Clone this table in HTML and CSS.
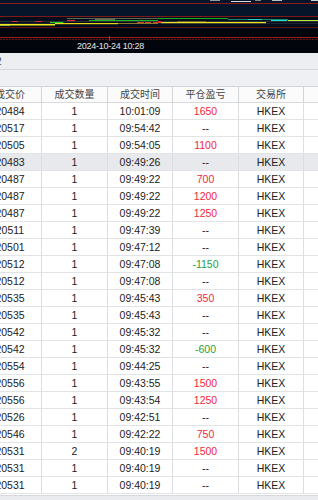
FILE: index.html
```html
<!DOCTYPE html>
<html lang="zh">
<head>
<meta charset="utf-8">
<link rel="stylesheet" href="styles.css">
</head>
<body>
<div class="page">
  <div class="chart">
    <svg class="chart-svg" width="318" height="42" viewBox="0 0 318 42">
      <rect x="0" y="0" width="318" height="16" fill="#07152a"/>
      <rect x="0" y="16" width="318" height="13" fill="#040d1b"/>
      <rect x="0" y="29" width="318" height="13" fill="#02060c"/>
      <!-- top fragments -->
      <rect x="210" y="0" width="10" height="1" fill="#9a9a9a"/>
      <rect x="231" y="1" width="20" height="1" fill="#d8d8d8"/>
      <rect x="255" y="0" width="6" height="1" fill="#8a8a8a"/>
      <rect x="272" y="0" width="10" height="1" fill="#bdbdbd"/>
      <rect x="311" y="0" width="7" height="1" fill="#d0d0d0"/>
      <rect x="0" y="3" width="318" height="1" fill="#8e1c1c"/>
      <rect x="0" y="16" width="318" height="1" fill="#7c1919"/>
      <!-- series -->
      <rect x="0" y="21" width="318" height="1" fill="#2a2f38"/>
      <rect x="0" y="23" width="318" height="1" fill="#1f2530"/>
      <rect x="67" y="18" width="91" height="1" fill="#5a6a50"/>
      <rect x="158" y="18" width="70" height="1" fill="#16b21e"/>
      <rect x="228" y="19" width="60" height="1" fill="#138a6e"/>
      <rect x="248" y="19" width="14" height="1" fill="#1fd0c8"/>
      <rect x="271" y="20" width="16" height="1" fill="#22d8d8"/>
      <rect x="288" y="20" width="30" height="1" fill="#b8e83a"/>
      <rect x="12" y="21" width="6" height="1" fill="#d22a2a"/>
      <rect x="35" y="21" width="7" height="1" fill="#d22a2a"/>
      <rect x="67" y="20" width="8" height="1" fill="#e03030"/>
      <rect x="137" y="22" width="7" height="1" fill="#d84020"/>
      <rect x="145" y="22" width="6" height="1" fill="#d84020"/>
      <rect x="153" y="22" width="8" height="1" fill="#d84020"/>
      <rect x="50" y="22" width="13" height="1" fill="#22d81e"/>
      <rect x="89" y="20" width="69" height="1" fill="#1fb81e"/>
      <rect x="95" y="19" width="20" height="1" fill="#6a6a50"/>
      <rect x="0" y="24" width="55" height="1.5" fill="#f0e81a"/>
      <rect x="55" y="23" width="63" height="1.2" fill="#e8d81a"/>
      <rect x="118" y="23" width="40" height="1" fill="#8a7a2a"/>
      <rect x="161" y="22" width="105" height="1.2" fill="#f0e01a"/>
      <rect x="177" y="21" width="29" height="1" fill="#6a6028"/>
      <rect x="158" y="21" width="3" height="2" fill="#e02a2a"/>
      <rect x="0" y="25" width="10" height="1" fill="#a8b83a"/>
      <rect x="0" y="27" width="318" height="1" fill="#5a1010"/>
      <!-- axis -->
      <rect x="0" y="37" width="318" height="1" fill="#9a1c1c"/>
      <line x1="0" y1="39.5" x2="318" y2="39.5" stroke="#6a1414" stroke-width="1" stroke-dasharray="2 1"/>
      <rect x="109" y="36" width="1" height="5" fill="#d02020"/>
    </svg>
    <div class="chart-label">2024-10-24 10:28</div>
  </div>
  <div class="toolbar"><span class="tb-num">2</span></div>
  <div class="subbar"></div>
  <div class="table">
    <div class="row head">
      <div class="cell">成交价</div><div class="cell">成交数量</div><div class="cell">成交时间</div><div class="cell">平仓盈亏</div><div class="cell">交易所</div><div class="cell blank"></div>
    </div>
    <div class="row"><div class="cell">20484</div><div class="cell">1</div><div class="cell">10:01:09</div><div class="cell up">1650</div><div class="cell">HKEX</div><div class="cell blank"></div></div>
    <div class="row"><div class="cell">20517</div><div class="cell">1</div><div class="cell">09:54:42</div><div class="cell">--</div><div class="cell">HKEX</div><div class="cell blank"></div></div>
    <div class="row"><div class="cell">20505</div><div class="cell">1</div><div class="cell">09:54:05</div><div class="cell up">1100</div><div class="cell">HKEX</div><div class="cell blank"></div></div>
    <div class="row sel"><div class="cell">20483</div><div class="cell">1</div><div class="cell">09:49:26</div><div class="cell">--</div><div class="cell">HKEX</div><div class="cell blank"></div></div>
    <div class="row"><div class="cell">20487</div><div class="cell">1</div><div class="cell">09:49:22</div><div class="cell up">700</div><div class="cell">HKEX</div><div class="cell blank"></div></div>
    <div class="row"><div class="cell">20487</div><div class="cell">1</div><div class="cell">09:49:22</div><div class="cell up">1200</div><div class="cell">HKEX</div><div class="cell blank"></div></div>
    <div class="row"><div class="cell">20487</div><div class="cell">1</div><div class="cell">09:49:22</div><div class="cell up">1250</div><div class="cell">HKEX</div><div class="cell blank"></div></div>
    <div class="row"><div class="cell">20511</div><div class="cell">1</div><div class="cell">09:47:39</div><div class="cell">--</div><div class="cell">HKEX</div><div class="cell blank"></div></div>
    <div class="row"><div class="cell">20501</div><div class="cell">1</div><div class="cell">09:47:12</div><div class="cell">--</div><div class="cell">HKEX</div><div class="cell blank"></div></div>
    <div class="row"><div class="cell">20512</div><div class="cell">1</div><div class="cell">09:47:08</div><div class="cell down">-1150</div><div class="cell">HKEX</div><div class="cell blank"></div></div>
    <div class="row"><div class="cell">20512</div><div class="cell">1</div><div class="cell">09:47:08</div><div class="cell">--</div><div class="cell">HKEX</div><div class="cell blank"></div></div>
    <div class="row"><div class="cell">20535</div><div class="cell">1</div><div class="cell">09:45:43</div><div class="cell up">350</div><div class="cell">HKEX</div><div class="cell blank"></div></div>
    <div class="row"><div class="cell">20535</div><div class="cell">1</div><div class="cell">09:45:43</div><div class="cell">--</div><div class="cell">HKEX</div><div class="cell blank"></div></div>
    <div class="row"><div class="cell">20542</div><div class="cell">1</div><div class="cell">09:45:32</div><div class="cell">--</div><div class="cell">HKEX</div><div class="cell blank"></div></div>
    <div class="row"><div class="cell">20542</div><div class="cell">1</div><div class="cell">09:45:32</div><div class="cell down">-600</div><div class="cell">HKEX</div><div class="cell blank"></div></div>
    <div class="row"><div class="cell">20554</div><div class="cell">1</div><div class="cell">09:44:25</div><div class="cell">--</div><div class="cell">HKEX</div><div class="cell blank"></div></div>
    <div class="row"><div class="cell">20556</div><div class="cell">1</div><div class="cell">09:43:55</div><div class="cell up">1500</div><div class="cell">HKEX</div><div class="cell blank"></div></div>
    <div class="row"><div class="cell">20556</div><div class="cell">1</div><div class="cell">09:43:54</div><div class="cell up">1250</div><div class="cell">HKEX</div><div class="cell blank"></div></div>
    <div class="row"><div class="cell">20526</div><div class="cell">1</div><div class="cell">09:42:51</div><div class="cell">--</div><div class="cell">HKEX</div><div class="cell blank"></div></div>
    <div class="row"><div class="cell">20546</div><div class="cell">1</div><div class="cell">09:42:22</div><div class="cell up">750</div><div class="cell">HKEX</div><div class="cell blank"></div></div>
    <div class="row"><div class="cell">20531</div><div class="cell">2</div><div class="cell">09:40:19</div><div class="cell up">1500</div><div class="cell">HKEX</div><div class="cell blank"></div></div>
    <div class="row"><div class="cell">20531</div><div class="cell">1</div><div class="cell">09:40:19</div><div class="cell">--</div><div class="cell">HKEX</div><div class="cell blank"></div></div>
    <div class="row"><div class="cell">20531</div><div class="cell">1</div><div class="cell">09:40:19</div><div class="cell">--</div><div class="cell">HKEX</div><div class="cell blank"></div></div>
  </div>
  <div class="footer"></div>
</div>
</body>
</html>
```

FILE: styles.css
```css
html, body {
  margin: 0;
  padding: 0;
  background: #ffffff;
}
.page {
  width: 318px;
  height: 500px;
  overflow: hidden;
  display: flex;
  flex-direction: column;
  font-family: "Liberation Sans", "Noto Sans CJK SC", sans-serif;
  color: #222;
}
.chart {
  height: 53px;
  flex: none;
  background: #02060c;
  display: flex;
  flex-direction: column;
}
.chart-svg {
  display: block;
  flex: none;
}
.chart-label {
  height: 11px;
  padding-left: 77px;
  font-size: 9px;
  letter-spacing: -0.25px;
  line-height: 9px;
  color: #e6e6e6;
}
.toolbar {
  height: 16px;
  flex: none;
  background: #eceef1;
  border-bottom: 1px solid #d3d6da;
  display: flex;
  align-items: center;
  overflow: hidden;
}
.tb-num {
  margin-left: -4px;
  font-size: 10px;
  color: #444;
}
.subbar {
  height: 16px;
  flex: none;
  background: #eef0f3;
  border-bottom: 1px solid #d0d3d7;
}
.table {
  flex: none;
  margin-left: -21px;
}
.row {
  display: grid;
  grid-template-columns: 63px 66px 65px 66px 65px 1fr;
  height: 17px;
  box-sizing: border-box;
  border-bottom: 1px solid #e2e3e5;
  background: #ffffff;
}
.row.head {
  height: 16px;
  background: #fbfbfc;
  border-bottom: 1px solid #d8dadd;
}
.row.sel {
  background: #e8e9ec;
}
.cell {
  border-right: 1px solid #dcdde0;
  text-align: center;
  font-size: 10.5px;
  line-height: 16px;
  white-space: nowrap;
  overflow: hidden;
}
.head .cell {
  font-size: 10px;
  line-height: 15px;
  color: #444;
  border-right-color: #d2d4d8;
}
.cell.blank {
  border-right: none;
}
.cell.up {
  color: #f2283c;
}
.cell.down {
  color: #25a23a;
}
.footer {
  flex: 1;
  margin-top: 1px;
  background: #e9ebee;
  border-top: 1px solid #d6d8dc;
}
```
